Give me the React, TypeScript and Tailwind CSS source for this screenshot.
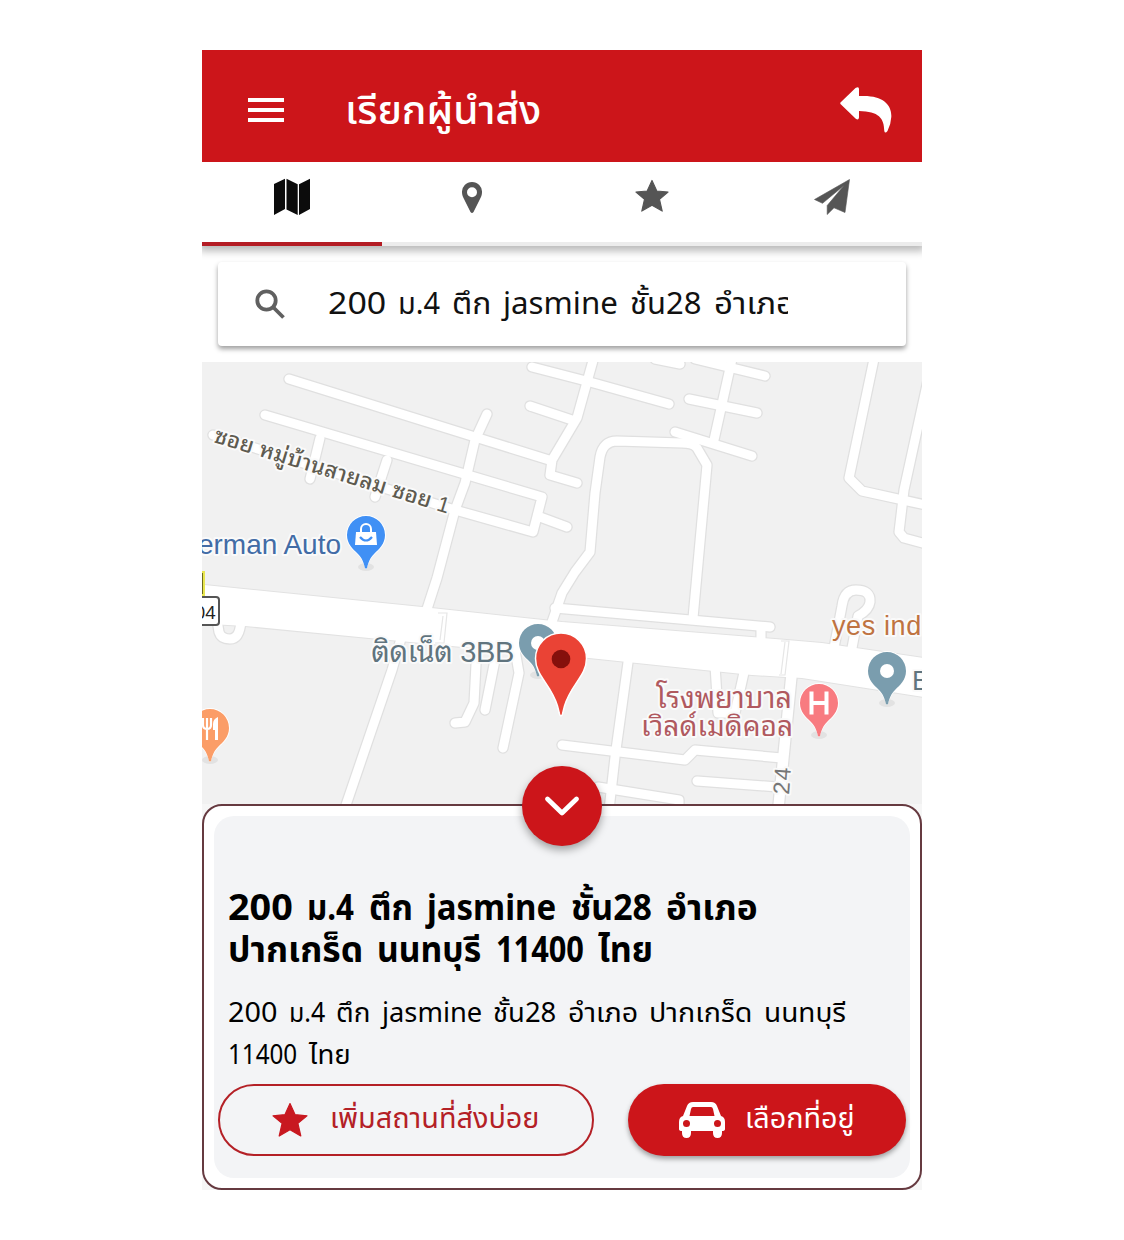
import React, { useLayoutEffect, useRef } from "react";

const minorRoads = [
  "M532 367L590 382L669 404",
  "M289 379L475 437L549 460",
  "M265 415L542 497L533 532L455 510L213 435",
  "M487 414L475 440L465 483L455 510L437 578L427 609",
  "M320 438L310 479",
  "M387 460L375 497",
  "M540 517L567 527",
  "M530 406L572 420",
  "M594 357L587 382L577 418L552 460L550 475L577 483",
  "M695 359L765 376",
  "M732 359L714 440",
  "M689 399L757 413",
  "M675 432L752 456",
  "M655 359L680 364",
  "M552 622L562 593L575 572L590 552L595 493L600 457Q603 441 617 441L682 443Q693 443 697 448L707 465L693 618",
  "M874 359L849 478L862 491L930 506",
  "M928 380L904 490L899 532L904 538L930 545",
  "M555 608L770 627",
  "M761 628L761 644",
  "M629 655L615 757L609 810",
  "M562 745L685 760L695 750L782 758",
  "M598 787L679 800L679 810",
  "M697 781L778 787",
  "M715 665L718 713L735 713L745 668",
  "M834 648L842 606Q844 590 856 590Q871 590 870 602Q869 610 858 616L852 648",
  "M402 635L392 670L345 808",
  "M477 645L474 703L465 722L455 723",
  "M497 650L485 710",
  "M515 650L519 673L503 748",
  "M217 620L219 632Q221 639 230 639Q240 639 241 620",
];
const mainRoad =
  "M195 584L422 607L562 622L775 639L822 643L930 659L930 698L802 678L752 675L589 658L462 647L369 638L245 626L195 623Z";

type Word = [text: string, width: number];

const searchWords: Word[] = [["200", 58], ["ม.4", 42], ["ตึก", 39], ["jasmine", 115], ["ชั้น28", 72], ["อำเภอ", 81]];
const titleLines: Word[][] = [
  [["200", 65], ["ม.4", 47], ["ตึก", 44], ["jasmine", 129], ["ชั้น28", 81], ["อำเภอ", 92]],
  [["ปากเกร็ด", 135], ["นนทบุรี", 104], ["11400", 88], ["ไทย", 55]],
];
const addressLines: Word[][] = [
  [["200", 49], ["ม.4", 36], ["ตึก", 34], ["jasmine", 100], ["ชั้น28", 63], ["อำเภอ", 70], ["ปากเกร็ด", 103], ["นนทบุรี", 82]],
  [["11400", 69], ["ไทย", 42]],
];

/** Stretches a word horizontally so that it fills the given width. */
function FitWord({ text, width }: { text: string; width: number }) {
  const ref = useRef<HTMLSpanElement>(null);
  useLayoutEffect(() => {
    const el = ref.current;
    if (el && el.offsetWidth) el.style.transform = `scaleX(${width / el.offsetWidth})`;
  }, [text, width]);
  return (
    <span className="inline-block shrink-0 whitespace-nowrap" style={{ width }}>
      <span ref={ref} className="inline-block origin-left">
        {text}
      </span>
    </span>
  );
}

function Line({ words, className }: { words: Word[]; className: string }) {
  return (
    <span className={className}>
      {words.map(([text, width]) => (
        <FitWord key={text} text={text} width={width} />
      ))}
    </span>
  );
}

function PoiPin({ x, y, color, children }: { x: number; y: number; color: string; children?: React.ReactNode }) {
  return (
    <g transform={`translate(${x} ${y})`}>
      <ellipse cx="0" cy="32" rx="8" ry="4" fill="#000" opacity=".06" />
      <path
        d="M0 -19.500A19.500 19.500 0 0 0 -19.500 0C-19.500 9 -14 14 -8.500 19C-4 23 -2 28 0 34C2 28 4 23 8.500 19C14 14 19.500 9 19.500 0A19.500 19.500 0 0 0 0 -19.500Z"
        fill="#fff"
        stroke="#fff"
      />
      <path
        d="M0 -19A19 19 0 0 0 -19 0C-19 9 -13 14 -8 19C-4 23 -2.500 27 -1 33Q0 34 1 33C2.500 27 4 23 8 19C13 14 19 9 19 0A19 19 0 0 0 0 -19Z"
        fill={color}
      />
      {children}
    </g>
  );
}

function MapView() {
  const halo = { paintOrder: "stroke" as const, stroke: "#fafafa", strokeWidth: 4, strokeLinejoin: "round" as const };
  return (
    <svg viewBox="202 362 720 442" className="block h-[442px] w-[720px] shrink-0 bg-[#f1f1f1]" fill="none">
      <g stroke="#e0e0e0" strokeWidth="11.5" strokeLinecap="round" strokeLinejoin="round">
        {minorRoads.map((d) => (
          <path key={d} d={d} />
        ))}
        <path d="M792 670L778 812" strokeWidth="13" />
      </g>
      <path d={mainRoad} fill="#fff" stroke="#e2e2e2" strokeWidth="2" />
      <g stroke="#fff" strokeWidth="9" strokeLinecap="round" strokeLinejoin="round">
        {minorRoads.map((d) => (
          <path key={d} d={d} />
        ))}
        <path d="M792 670L778 812" strokeWidth="10.5" />
      </g>
      <path d={mainRoad} fill="#fff" />
      <path d="M438 613H447L444 643H435M443 616L440 640M781 641H789L785 675H779M785 642L781 674" stroke="#e6e6e6" strokeWidth="1.2" />

      <g fontFamily="'Liberation Sans', 'Noto Sans Thai Looped', Loma, Waree, Garuda, 'Noto Sans Thai', sans-serif">
        <text transform="translate(213 442) rotate(17)" fontSize="22" fontWeight="500" textLength="245" fill="#5e5b50" {...halo}>
          ซอย หมู่บ้านสายลม ซอย 1
        </text>
        <text x="198" y="554" fontSize="28" textLength="143" fill="#426ca6" {...halo}>erman Auto</text>
        <text x="371" y="662" fontSize="29" textLength="143" fill="#60747e" {...halo}>ติดเน็ต 3BB</text>
        <text x="832" y="635" fontSize="27" fill="#bf7341" letterSpacing=".6" {...halo}>yes ind</text>
        <text x="656" y="708" fontSize="29" textLength="136" fill="#b0595f" {...halo}>โรงพยาบาล</text>
        <text x="641" y="736" fontSize="28" textLength="152" fill="#b0595f" {...halo}>เวิลด์เมดิคอล</text>
        <text x="912" y="690" fontSize="27" fill="#60747e" {...halo}>B</text>
        <text transform="translate(789 795) rotate(-86)" fontSize="23" textLength="27" fill="#777" {...halo}>24</text>
      </g>

      <rect x="190" y="572" width="14" height="23" fill="#6c6b1d" stroke="#e8e650" strokeWidth="2" />
      <rect x="180" y="597" width="39" height="28" rx="3" fill="#fff" stroke="#555" strokeWidth="2" />
      <text x="195" y="619" fontSize="18" fill="#222" fontFamily="Noto Sans, sans-serif">04</text>

      <PoiPin x={366} y={535} color="#4090f5">
        <path d="M-10 -3H10L11 10H-11Z" fill="#fff" />
        <path d="M-5 -2V-6A5 5 0 0 1 5 -6V-2" stroke="#fff" strokeWidth="2" />
        <path d="M-6 2Q0 9 6 2" stroke="#4090f5" strokeWidth="2.200" />
      </PoiPin>
      <PoiPin x={538} y={643} color="#7a9dae">
        <circle r="7" fill="#fff" />
      </PoiPin>
      <PoiPin x={887} y={671} color="#7a9dae">
        <circle r="7" fill="#fff" />
      </PoiPin>
      <PoiPin x={819} y={703} color="#f87b80">
        <path d="M-7.500 -11.500V11.500M7.500 -11.500V11.500M-7 0H7" stroke="#fff" strokeWidth="4" />
      </PoiPin>
      <PoiPin x={210} y={728} color="#fb9d67">
        <path d="M-7 -10V-3Q-7 1 -3 1V12M-3 -10V1M1 -10V-3Q1 1 -3 1" stroke="#fff" strokeWidth="2.200" />
        <path d="M8 -11V12H5V2H3V-4Q3 -9 8 -11Z" fill="#fff" />
      </PoiPin>
      <path
        d="M561 633A25.500 25.500 0 0 0 535.500 658.500C535.500 676 551 684 557.500 706L559.500 714Q561 718 562.500 714L564.500 706C571 684 586.500 676 586.500 658.500A25.500 25.500 0 0 0 561 633Z"
        fill="#ea4335"
        stroke="#fff"
        strokeWidth="1.500"
      />
      <circle cx="561" cy="659" r="9.300" fill="#85100c" />
    </svg>
  );
}

function Star({ className }: { className: string }) {
  return (
    <svg viewBox="0 0 36 36" className={className} fill="currentColor" stroke="currentColor" strokeWidth="1.200" strokeLinejoin="round">
      <path d="M18 1.500L23.100 12.700L35 13.800L25.900 21.400L28.800 34L18 27.800L7.200 34L10.100 21.400L1 13.800L12.900 12.700Z" />
    </svg>
  );
}

export default function App() {
  return (
    <div className="h-[1240px] w-[1124px] overflow-hidden bg-white pt-[50px] font-['Noto_Sans','Noto_Sans_Thai',sans-serif]">
      <main className="mx-auto flex h-[1140px] w-[720px] flex-col overflow-hidden bg-[#f6f6f6]">
        <header className="relative z-20 flex h-28 shrink-0 items-center bg-[#cc151a] pt-2 text-white">
          <svg viewBox="0 0 36 24" className="ml-[46px] h-6 w-9" fill="currentColor">
            <path d="M0 0H36V4H0ZM0 10H36V14H0ZM0 20H36V24H0Z" />
          </svg>
          <h1 className="ml-[61px] pb-[3px] text-[40px] leading-none font-medium">
            <FitWord text="เรียกผู้นำส่ง" width={196} />
          </h1>
          <svg viewBox="0 0 52 47" className="mr-[30px] ml-auto h-[47px] w-[52px]" fill="currentColor">
            <path d="M1 15L15.500 1Q19 -1 19 2V9H24C43 9 52 18 51.300 30Q51 37 47.500 44Q45 47 44.300 44C44 31 39 24.500 19 24V30.500Q18.500 34 15.500 31.500L1 17.500Q-.5 16.200 1 15Z" />
          </svg>
        </header>

        <nav className="relative z-10 grid h-[84px] shrink-0 grid-cols-4 border-b-4 border-[#ececec] bg-white pt-4 text-[#555] shadow-[0_2px_8px_3px_rgba(0,0,0,0.28)]">
          <div className="-mb-1 flex justify-center border-b-4 border-[#b41c24] text-[#0c0c0c]">
            <svg viewBox="0 0 36 38" className="h-[38px] w-9" fill="currentColor">
              <path d="M0 6L11 .7V31L0 37ZM12.500 .7L23.700 6.300V37L12.500 31.500ZM25 6.300L36 .7V31L25 37Z" />
            </svg>
          </div>
          <div className="flex justify-center">
            <svg viewBox="0 0 20 31" className="mt-1 h-[31px] w-5" fill="currentColor" fillRule="evenodd">
              <path d="M10 0A10 10 0 0 1 20 10.500C20 13 19 15 18 17L11.500 30Q10 32 8.500 30L2 17C1 15 0 13 0 10.500A10 10 0 0 1 10 0ZM10 5.200A5 5 0 1 0 10 15.200A5 5 0 1 0 10 5.200Z" />
            </svg>
          </div>
          <div className="flex justify-center">
            <Star className="mt-[1px] h-[34px] w-[34px]" />
          </div>
          <div className="flex justify-center">
            <svg viewBox="0 0 36 36" className="mt-[1px] h-9 w-9" fill="currentColor" stroke="currentColor" strokeWidth=".6" strokeLinejoin="round">
              <path d="M35.500 .5L.5 20.500L8.500 24.300L30 6.500L13.200 26.500V35.500L20 28.800L31 33.500Z" />
            </svg>
          </div>
        </nav>

        <section className="h-[116px] shrink-0 bg-white px-4 pt-4">
          <div className="relative z-10 flex h-[84px] items-center rounded-[4px] bg-white shadow-[0_3px_5px_rgba(0,0,0,0.38)]">
            <svg viewBox="0 0 32 32" className="ml-9 h-8 w-8 text-[#606060]" fill="none" stroke="currentColor" strokeWidth="3.800">
              <circle cx="12.500" cy="12.500" r="9.200" />
              <path d="M19 19L29.500 29.500" />
            </svg>
            <p className="ml-[42px] w-[460px] overflow-hidden pb-[4px] text-[31px] leading-[60px] text-[#111]">
              <Line words={searchWords} className="flex gap-[12px]" />
            </p>
          </div>
        </section>

        <MapView />

        <section className="relative h-[386px] shrink-0 rounded-[20px] border-2 border-[#663a40] bg-white p-[10px]">
          <button className="absolute -top-10 left-[318px] flex h-20 w-20 items-center justify-center rounded-full bg-[#cc151a] text-white shadow-[0_4px_8px_rgba(0,0,0,0.35)]">
            <svg viewBox="0 0 36 22" className="h-[22px] w-9" fill="none" stroke="currentColor" strokeWidth="4.800" strokeLinecap="round" strokeLinejoin="round">
              <path d="M3.500 4L18 18L32.500 4" />
            </svg>
          </button>
          <div className="h-[362px] rounded-[20px] bg-[#f3f4f6] pt-[70px] text-black">
            <h2 className="pl-[14px] text-[36px] leading-[42px] font-bold">
              {titleLines.map((words, i) => (
                <Line key={i} words={words} className="flex gap-[14.400px]" />
              ))}
            </h2>
            <p className="mt-[21px] pl-[14px] text-[27px] leading-[42px]">
              {addressLines.map((words, i) => (
                <Line key={i} words={words} className="flex gap-[11.500px]" />
              ))}
            </p>
            <div className="mt-[9px] flex pl-1">
              <button className="flex h-[72px] w-[376px] shrink-0 items-center rounded-full border-2 border-[#b42026] pl-[52px] text-[28px] text-[#b42026]">
                <Star className="h-9 w-9 text-[#c81820]" />
                <span className="ml-[19px] pb-[6px]">
                  <FitWord text="เพิ่มสถานที่ส่งบ่อย" width={210} />
                </span>
              </button>
              <button className="ml-[34px] flex h-[72px] w-[278px] shrink-0 items-center rounded-full bg-[#cc151a] pl-[51px] text-[28px] text-white shadow-[0_3px_5px_rgba(0,0,0,0.35)]">
                <svg viewBox="0 0 46 36" className="h-9 w-[46px]" fill="currentColor" fillRule="evenodd">
                  <path d="M4 14L8 4Q9.500 0 14 0H32Q36.500 0 38 4L42 14Q46 15 46 20V27Q46 29 43 29V31Q43 36 38.500 36Q34 36 34 31V29H12V31Q12 36 7.500 36Q3 36 3 31V29Q0 29 0 27V20Q0 15 4 14ZM14 5Q12.500 5 12 7L10.500 14H35.500L34 7Q33.500 5 32 5ZM7.500 18A3.500 3.500 0 1 0 7.500 25A3.500 3.500 0 1 0 7.500 18ZM38.500 18A3.500 3.500 0 1 0 38.500 25A3.500 3.500 0 1 0 38.500 18Z" />
                </svg>
                <span className="ml-[18px] pb-[6px]">
                  <FitWord text="เลือกที่อยู่" width={110} />
                </span>
              </button>
            </div>
          </div>
        </section>
      </main>
    </div>
  );
}
